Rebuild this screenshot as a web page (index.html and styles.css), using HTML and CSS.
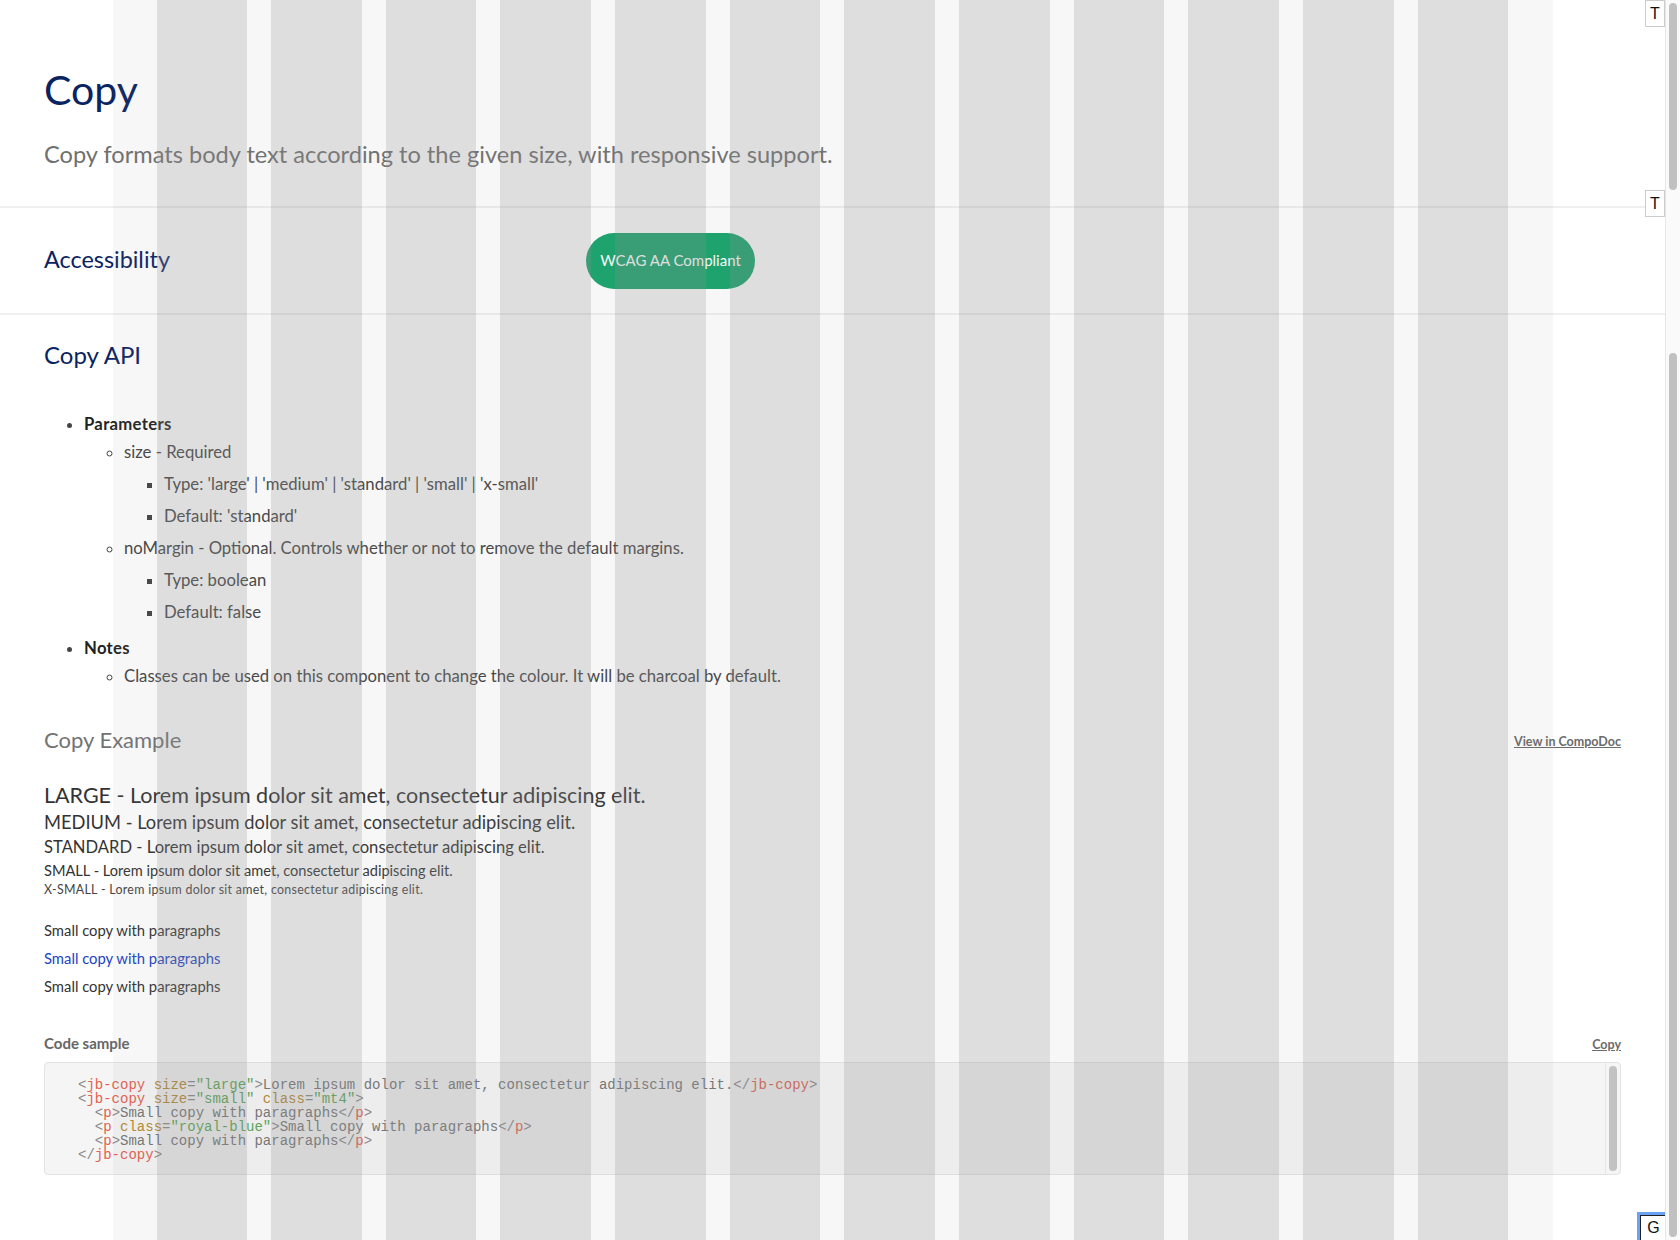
FILE: index.html
```html
<!DOCTYPE html>
<html lang="en">
<head>
<meta charset="utf-8">
<title>Copy</title>
<link rel="stylesheet" href="styles.css">
</head>
<body>
<main class="page">
  <header class="intro">
    <h1 class="title">Copy</h1>
    <p class="lead">Copy formats body text according to the given size, with responsive support.</p>
  </header>

  <section class="a11y">
    <h2 class="section-title a11y-title">Accessibility</h2>
    <span class="badge">WCAG AA Compliant</span>
  </section>

  <section class="api">
    <h2 class="section-title">Copy API</h2>
    <ul class="api-list">
      <li><strong>Parameters</strong>
        <ul>
          <li>size - Required
            <ul>
              <li>Type: 'large' | 'medium' | 'standard' | 'small' | 'x-small'</li>
              <li>Default: 'standard'</li>
            </ul>
          </li>
          <li>noMargin - Optional. Controls whether or not to remove the default margins.
            <ul>
              <li>Type: boolean</li>
              <li>Default: false</li>
            </ul>
          </li>
        </ul>
      </li>
      <li><strong>Notes</strong>
        <ul>
          <li>Classes can be used on this component to change the colour. It will be charcoal by default.</li>
        </ul>
      </li>
    </ul>

    <div class="example-head">
      <h3 class="example-title">Copy Example</h3>
      <a class="small-link" href="#">View in CompoDoc</a>
    </div>

    <div class="samples">
      <p class="copy copy-large">LARGE - Lorem ipsum dolor sit amet, consectetur adipiscing elit.</p>
      <p class="copy copy-medium">MEDIUM - Lorem ipsum dolor sit amet, consectetur adipiscing elit.</p>
      <p class="copy copy-standard">STANDARD - Lorem ipsum dolor sit amet, consectetur adipiscing elit.</p>
      <p class="copy copy-small">SMALL - Lorem ipsum dolor sit amet, consectetur adipiscing elit.</p>
      <p class="copy copy-xsmall">X-SMALL - Lorem ipsum dolor sit amet, consectetur adipiscing elit.</p>
    </div>

    <div class="paras">
      <p class="para">Small copy with paragraphs</p>
      <p class="para royal-blue">Small copy with paragraphs</p>
      <p class="para">Small copy with paragraphs</p>
    </div>

    <div class="code-head">
      <span class="code-label">Code sample</span>
      <a class="small-link" href="#">Copy</a>
    </div>
    <div class="code-box">
<pre class="code"><span class="p">&lt;</span><span class="t">jb-copy</span> <span class="a">size</span><span class="p">=</span><span class="s">"large"</span><span class="p">&gt;</span>Lorem ipsum dolor sit amet, consectetur adipiscing elit.<span class="p">&lt;/</span><span class="t">jb-copy</span><span class="p">&gt;</span>
<span class="p">&lt;</span><span class="t">jb-copy</span> <span class="a">size</span><span class="p">=</span><span class="s">"small"</span> <span class="a">class</span><span class="p">=</span><span class="s">"mt4"</span><span class="p">&gt;</span>
  <span class="p">&lt;</span><span class="t">p</span><span class="p">&gt;</span>Small copy with paragraphs<span class="p">&lt;/</span><span class="t">p</span><span class="p">&gt;</span>
  <span class="p">&lt;</span><span class="t">p</span> <span class="a">class</span><span class="p">=</span><span class="s">"royal-blue"</span><span class="p">&gt;</span>Small copy with paragraphs<span class="p">&lt;/</span><span class="t">p</span><span class="p">&gt;</span>
  <span class="p">&lt;</span><span class="t">p</span><span class="p">&gt;</span>Small copy with paragraphs<span class="p">&lt;/</span><span class="t">p</span><span class="p">&gt;</span>
<span class="p">&lt;/</span><span class="t">jb-copy</span><span class="p">&gt;</span></pre>
      <div class="code-scroll" aria-hidden="true"><span class="code-thumb"></span></div>
    </div>
  </section>

  <div class="grid-overlay" aria-hidden="true">
    <div class="grid-inner">
      <span class="col"></span><span class="col"></span><span class="col"></span><span class="col"></span>
      <span class="col"></span><span class="col"></span><span class="col"></span><span class="col"></span>
      <span class="col"></span><span class="col"></span><span class="col"></span><span class="col"></span>
    </div>
  </div>

  <button class="tool-btn tool-t1" type="button">T</button>
  <button class="tool-btn tool-t2" type="button">T</button>
  <button class="tool-btn tool-g" type="button">G</button>
</main>
<aside class="rail" aria-hidden="true">
  <span class="thumb thumb-top"></span>
  <span class="thumb thumb-main"></span>
</aside>
</body>
</html>
```

FILE: styles.css
```css
html, body {
  margin: 0;
  padding: 0;
  height: 100%;
}

body {
  display: flex;
  overflow: hidden;
  background: #ffffff;
  font-family: Lato, "Noto Sans", sans-serif;
  color: #333333;
}

.page {
  flex: 1;
  position: relative;
  overflow: hidden;
  min-width: 0;
}

/* ---------- intro ---------- */
.intro {
  padding: 66px 44px 38px;
  border-bottom: 2px solid #efefef;
}

.title {
  margin: 0;
  font-size: 41px;
  line-height: 48px;
  font-weight: 400;
  color: #0a2362;
}

.lead {
  margin: 26px 0 0;
  font-size: 23.6px;
  line-height: 28px;
  color: #707070;
}

/* ---------- accessibility ---------- */
.a11y {
  display: grid;
  grid-template-columns: 542px auto;
  align-items: center;
  padding: 25px 44px 24px;
  border-bottom: 2px solid #efefef;
}

.section-title {
  margin: 0;
  font-size: 24px;
  line-height: 29px;
  font-weight: 400;
  color: #0a2362;
}

.a11y-title {
  font-size: 23.4px;
  margin-bottom: 4px;
}

.badge {
  justify-self: start;
  box-sizing: border-box;
  width: 169px;
  height: 56px;
  padding-bottom: 3px;
  border-radius: 28px;
  background: #15a56c;
  color: #ffffff;
  font-size: 15px;
  display: flex;
  align-items: center;
  justify-content: center;
}

/* ---------- api ---------- */
.api {
  padding: 25px 44px 0;
}

.api-list {
  margin: 43px 0 0;
  padding-left: 40px;
  font-size: 16.7px;
  line-height: 24px;
  color: #444444;
}

.api-list ul {
  margin: 8px 0 0;
  padding-left: 40px;
}

.api-list > li > ul {
  margin-top: 4px;
}

.api-list > li + li {
  margin-top: 12px;
}

.api-list ul li + li {
  margin-top: 8px;
}

.api-list strong {
  color: #222222;
  font-weight: 700;
  letter-spacing: 0.3px;
}

.example-head,
.code-head {
  display: flex;
  justify-content: space-between;
  align-items: center;
}

.example-head {
  margin-top: 38px;
}

.example-title {
  margin: 0;
  font-size: 22px;
  line-height: 28px;
  font-weight: 400;
  color: #737373;
}

.small-link {
  font-size: 12.5px;
  line-height: 16px;
  font-weight: 700;
  color: #6b6b6b;
  text-decoration: underline;
  margin-top: 3px;
}

.samples {
  margin-top: 27px;
}

.copy {
  margin: 0;
  color: #333333;
}

.copy-large { font-size: 21.5px; line-height: 28px; }
.copy-medium { font-size: 18.3px; line-height: 26px; }
.copy-standard { font-size: 16.6px; line-height: 25px; }
.copy-small { font-size: 14.6px; line-height: 21px; }
.copy-xsmall { font-size: 12.4px; line-height: 18px; letter-spacing: 0.3px; color: #444444; }

.paras {
  margin-top: 21px;
}

.para {
  margin: 0;
  font-size: 14.8px;
  line-height: 20px;
  color: #333333;
}

.para + .para {
  margin-top: 8px;
}

.royal-blue {
  color: #1a43c4;
}

.code-head {
  margin-top: 37px;
}

.code-label {
  font-size: 15px;
  line-height: 20px;
  font-weight: 700;
  color: #666666;
}

.code-box {
  margin-top: 9px;
  height: 113px;
  box-sizing: border-box;
  border: 1px solid #e3e3e3;
  border-radius: 4px;
  background: #f5f5f5;
  display: flex;
  overflow: hidden;
}

.code {
  flex: 1;
  margin: 0;
  padding: 15px 16px 13px 33px;
  font-family: "Liberation Mono", "DejaVu Sans Mono", monospace;
  font-size: 14px;
  line-height: 14px;
  color: #757575;
  overflow: hidden;
}

.code .p { color: #8a8a8a; }
.code .t { color: #e4604f; }
.code .a { color: #b5892e; }
.code .s { color: #5aa552; }

.code-scroll {
  flex: 0 0 15px;
  box-sizing: border-box;
  border-left: 1px solid #e6e6e6;
  padding: 3px;
  display: flex;
}

.code-thumb {
  flex: 1;
  border-radius: 4px;
  background: #c2c2c2;
}

/* ---------- grid overlay ---------- */
.grid-overlay {
  position: absolute;
  top: 0;
  bottom: 0;
  left: 0;
  right: 0;
  pointer-events: none;
  z-index: 5;
}

.grid-inner {
  box-sizing: border-box;
  max-width: 1440px;
  height: 100%;
  margin: 0 auto;
  padding: 0 44px;
  display: grid;
  grid-template-columns: repeat(12, 1fr);
  column-gap: 24px;
  background: rgba(145, 145, 145, 0.073);
}

.col {
  background: rgba(145, 145, 145, 0.244);
}

/* ---------- tool buttons ---------- */
.tool-btn {
  position: absolute;
  z-index: 10;
  margin: 0;
  padding: 0;
  box-sizing: border-box;
  background: #ffffff;
  font-family: "Liberation Sans", Arial, sans-serif;
  font-size: 16px;
  color: #111111;
  display: flex;
  align-items: center;
  justify-content: center;
}

.tool-t1,
.tool-t2 {
  right: 0;
  width: 20px;
  height: 27px;
  border: 1px solid #cccccc;
}

.tool-t1 { top: 0; }
.tool-t2 { top: 190px; }

.tool-g {
  left: 1640px;
  top: 1215px;
  width: 27px;
  height: 30px;
  border: 1px solid #222222;
  outline: 3px solid #6aa3f5;
  padding-bottom: 5px;
}

/* ---------- page scroll rail ---------- */
.rail {
  flex: 0 0 15px;
  box-sizing: border-box;
  border-left: 1px solid #e6e6e6;
  background: #fafafa;
  display: flex;
  flex-direction: column;
  align-items: flex-start;
  padding: 3px 0 0 3px;
}

.thumb {
  width: 8px;
  border-radius: 4px;
  background: #c1c1c1;
}

.thumb-top {
  height: 187px;
}

.thumb-main {
  margin-top: 163px;
  height: 884px;
}
```
